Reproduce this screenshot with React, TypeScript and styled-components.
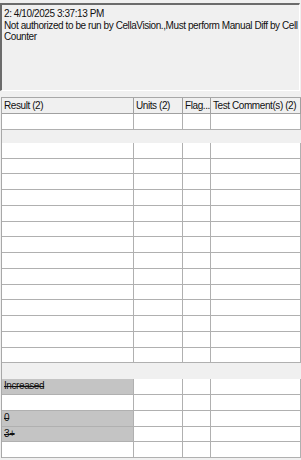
import React from "react";
import styled, { createGlobalStyle } from "styled-components";

const GlobalStyle = createGlobalStyle`
  html, body {
    margin: 0;
    padding: 0;
    background: #f0f0f0;
  }
  body {
    font-family: "Liberation Sans", Arial, sans-serif;
    font-size: 10px;
    color: #111;
  }
`;

const ROW_H = 15.75;

type Row = { result?: string; shaded?: boolean };

const topRows: Row[] = [{}];
const midRows: Row[] = Array.from({ length: 14 }, () => ({}));
const bottomRows: Row[] = [
  { result: "Increased", shaded: true },
  {},
  { result: "0", shaded: true },
  { result: "3+", shaded: true },
  {},
];

function App() {
  return (
    <Screen>
      <GlobalStyle />
      <NotePanel>
        <NoteLine>2: 4/10/2025 3:37:13 PM</NoteLine>
        <NoteLine>
          Not authorized to be run by CellaVision.,Must perform Manual Diff by Cell
          Counter
        </NoteLine>
      </NotePanel>
      <Grid>
        <HeaderRow>
          <HeaderCell>Result (2)</HeaderCell>
          <HeaderCell>Units (2)</HeaderCell>
          <HeaderCell>Flag...</HeaderCell>
          <HeaderCell>Test Comment(s) (2)</HeaderCell>
        </HeaderRow>
        {topRows.map((r, i) => (
          <DataRow key={"t" + i} row={r} />
        ))}
        <Band $h={13} />
        {midRows.map((r, i) => (
          <DataRow key={"m" + i} row={r} />
        ))}
        <Band $h={16} />
        {bottomRows.map((r, i) => (
          <DataRow key={"b" + i} row={r} />
        ))}
      </Grid>
    </Screen>
  );
}

function DataRow({ row }: { row: Row }) {
  return (
    <RowLine>
      <Cell $shaded={row.shaded}>
        {row.result && <Struck>{row.result}</Struck>}
      </Cell>
      <Cell />
      <Cell />
      <Cell />
    </RowLine>
  );
}

const Screen = styled.div`
  width: 301px;
  height: 460px;
  overflow: hidden;
  background: #f0f0f0;
  padding-top: 3px;
  box-sizing: border-box;
`;

const NotePanel = styled.div`
  height: 88px;
  box-sizing: border-box;
  margin-right: 1px;
  border-top: 2px solid #6b6b6b;
  border-left: 2px solid #6b6b6b;
  border-right: 1px solid #ffffff;
  border-bottom: 1px solid #ffffff;
  background: #f0f0f0;
  padding: 3px 1px 3px 2px;
`;

const NoteLine = styled.div`
  font-size: 10px;
  line-height: 11.5px;
  letter-spacing: -0.42px;
`;

const Grid = styled.div`
  margin-top: 6px;
  margin-left: 1px;
  border-left: 1px solid #a8a8a8;
  width: 299px;
`;

const columns = "132px 49px 28px 1fr";

const HeaderRow = styled.div`
  display: grid;
  grid-template-columns: ${columns};
  height: 17px;
  box-sizing: border-box;
  border-top: 1px solid #a8a8a8;
  border-bottom: 1px solid #a0a0a0;
  background: #f0f0f0;
`;

const HeaderCell = styled.div`
  border-right: 1px solid #a0a0a0;
  padding-left: 2px;
  font-size: 10px;
  line-height: 15px;
  white-space: nowrap;
  overflow: hidden;
  letter-spacing: -0.42px;
`;

const RowLine = styled.div`
  display: grid;
  grid-template-columns: ${columns};
  height: ${ROW_H}px;
  box-sizing: border-box;
  border-bottom: 1px solid #b0b0b0;
  background: #ffffff;
`;

const Cell = styled.div<{ $shaded?: boolean }>`
  border-right: 1px solid #b0b0b0;
  background: ${(p) => (p.$shaded ? "#c4c4c4" : "#ffffff")};
  padding-left: 2px;
  font-size: 10px;
  line-height: 14px;
  overflow: hidden;
  white-space: nowrap;
`;

const Struck = styled.span`
  text-decoration: line-through;
  letter-spacing: -0.42px;
`;

const Band = styled.div<{ $h: number }>`
  height: ${(p) => p.$h}px;
  background: #f0f0f0;
`;

export default App;
